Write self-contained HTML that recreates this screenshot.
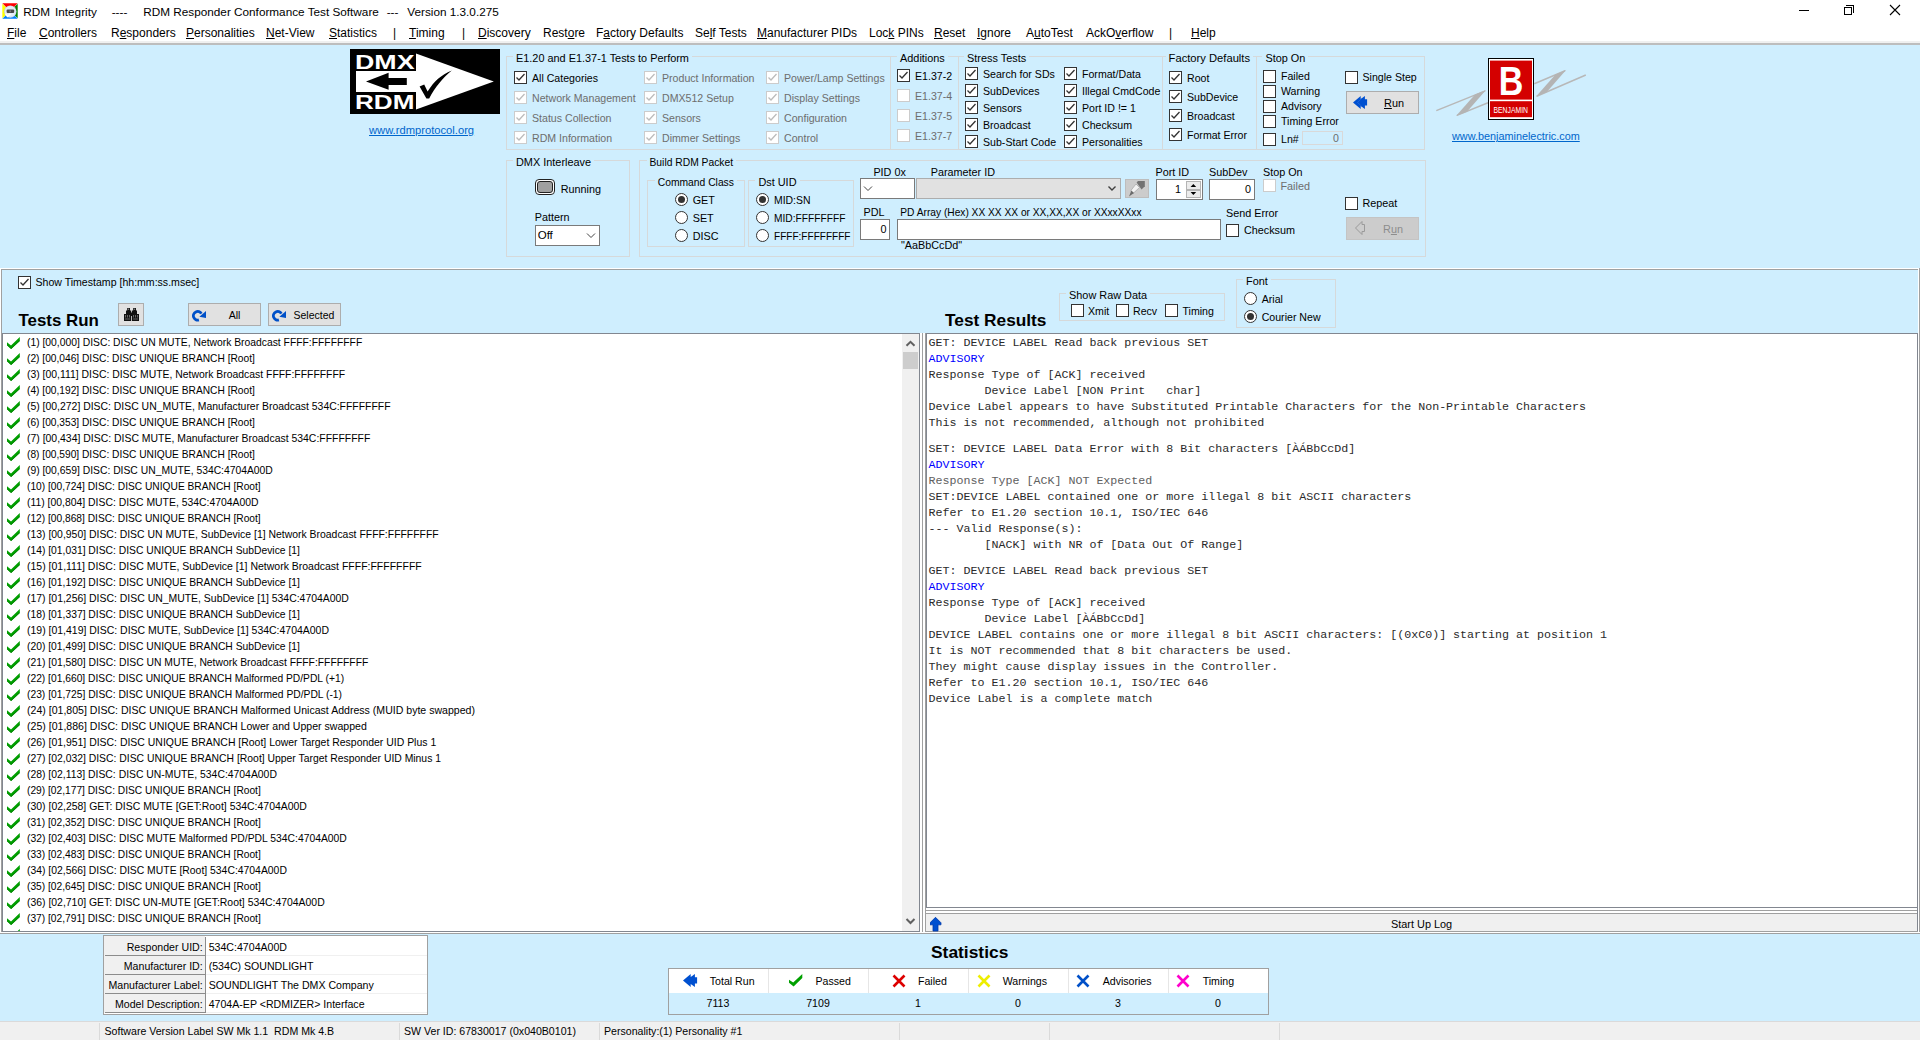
<!DOCTYPE html>
<html><head><meta charset="utf-8"><style>
html,body{margin:0;padding:0;width:1920px;height:1040px;overflow:hidden;background:#fff}
body{position:relative;font-family:"Liberation Sans",sans-serif}
body div,body svg{position:absolute}
.t{white-space:pre;line-height:normal}
u{text-decoration:underline;text-underline-offset:1px}
</style></head><body>
<div style="left:0px;top:0px;width:1920px;height:43px;background:#fff"></div>
<svg style="left:2px;top:3px" width="16" height="16" viewBox="0 0 16 16">
<polygon points="0.3,0.3 15.7,0.3 8,8" fill="#ff0000"/>
<polygon points="15.7,0.8 15.7,15.2 8,8" fill="#008000"/>
<polygon points="15.7,15.7 0.3,15.7 8,8" fill="#0080ff"/>
<polygon points="0.3,15.2 0.3,0.8 8,8" fill="#ffff00"/>
<circle cx="8.3" cy="8.6" r="6.2" fill="#c8d4e6"/>
<circle cx="8.3" cy="8.4" r="5.4" fill="#e4ecf6"/>
<rect x="4.6" y="6.6" width="7.6" height="3.4" rx="1" fill="#4a4a4a"/>
<rect x="7.6" y="7.4" width="1.2" height="1.8" fill="#888"/>
<path d="M3.6 10.6 L5.6 13.4 L8.4 10.8" stroke="#fff" stroke-width="1.6" fill="none"/>
</svg>
<div class="t" style="left:23.3px;top:5px;font-size:11.75px;color:#000;font-weight:normal;font-family:'Liberation Sans', sans-serif;">RDM</div>
<div class="t" style="left:55px;top:5px;font-size:11.75px;color:#000;font-weight:normal;font-family:'Liberation Sans', sans-serif;">Integrity</div>
<div class="t" style="left:111.7px;top:5px;font-size:11.75px;color:#000;font-weight:normal;font-family:'Liberation Sans', sans-serif;">----</div>
<div class="t" style="left:143.3px;top:5px;font-size:11.75px;color:#000;font-weight:normal;font-family:'Liberation Sans', sans-serif;">RDM Responder Conformance Test Software</div>
<div class="t" style="left:386.7px;top:5px;font-size:11.75px;color:#000;font-weight:normal;font-family:'Liberation Sans', sans-serif;">---</div>
<div class="t" style="left:407.3px;top:5px;font-size:11.75px;color:#000;font-weight:normal;font-family:'Liberation Sans', sans-serif;">Version 1.3.0.275</div>
<div style="left:1799px;top:10px;width:10px;height:1px;background:#000"></div>
<div style="left:1846px;top:5px;width:8px;height:8px;border:1px solid #000;box-sizing:border-box;border-left:none;border-bottom:none"></div>
<div style="left:1844px;top:7px;width:8px;height:8px;border:1px solid #000;box-sizing:border-box;background:#fff"></div>
<svg style="left:1889px;top:4px" width="12" height="12" viewBox="0 0 12 12"><path d="M1 1 L11 11 M11 1 L1 11" stroke="#000" stroke-width="1.1"/></svg>
<div class="t" style="left:7px;top:26px;font-size:12px;color:#000;font-weight:normal;font-family:'Liberation Sans', sans-serif;"><u>F</u>ile</div>
<div class="t" style="left:39px;top:26px;font-size:12px;color:#000;font-weight:normal;font-family:'Liberation Sans', sans-serif;"><u>C</u>ontrollers</div>
<div class="t" style="left:111px;top:26px;font-size:12px;color:#000;font-weight:normal;font-family:'Liberation Sans', sans-serif;">R<u>e</u>sponders</div>
<div class="t" style="left:186px;top:26px;font-size:12px;color:#000;font-weight:normal;font-family:'Liberation Sans', sans-serif;"><u>P</u>ersonalities</div>
<div class="t" style="left:266px;top:26px;font-size:12px;color:#000;font-weight:normal;font-family:'Liberation Sans', sans-serif;"><u>N</u>et-View</div>
<div class="t" style="left:329px;top:26px;font-size:12px;color:#000;font-weight:normal;font-family:'Liberation Sans', sans-serif;"><u>S</u>tatistics</div>
<div class="t" style="left:393px;top:26px;font-size:12px;color:#000;font-weight:normal;font-family:'Liberation Sans', sans-serif;">|</div>
<div class="t" style="left:409px;top:26px;font-size:12px;color:#000;font-weight:normal;font-family:'Liberation Sans', sans-serif;"><u>T</u>iming</div>
<div class="t" style="left:462px;top:26px;font-size:12px;color:#000;font-weight:normal;font-family:'Liberation Sans', sans-serif;">|</div>
<div class="t" style="left:478px;top:26px;font-size:12px;color:#000;font-weight:normal;font-family:'Liberation Sans', sans-serif;"><u>D</u>iscovery</div>
<div class="t" style="left:543px;top:26px;font-size:12px;color:#000;font-weight:normal;font-family:'Liberation Sans', sans-serif;">Rest<u>o</u>re</div>
<div class="t" style="left:596px;top:26px;font-size:12px;color:#000;font-weight:normal;font-family:'Liberation Sans', sans-serif;">F<u>a</u>ctory Defaults</div>
<div class="t" style="left:695px;top:26px;font-size:12px;color:#000;font-weight:normal;font-family:'Liberation Sans', sans-serif;">Se<u>l</u>f Tests</div>
<div class="t" style="left:757px;top:26px;font-size:12px;color:#000;font-weight:normal;font-family:'Liberation Sans', sans-serif;"><u>M</u>anufacturer PIDs</div>
<div class="t" style="left:869px;top:26px;font-size:12px;color:#000;font-weight:normal;font-family:'Liberation Sans', sans-serif;">Loc<u>k</u> PINs</div>
<div class="t" style="left:934px;top:26px;font-size:12px;color:#000;font-weight:normal;font-family:'Liberation Sans', sans-serif;"><u>R</u>eset</div>
<div class="t" style="left:977px;top:26px;font-size:12px;color:#000;font-weight:normal;font-family:'Liberation Sans', sans-serif;"><u>I</u>gnore</div>
<div class="t" style="left:1026px;top:26px;font-size:12px;color:#000;font-weight:normal;font-family:'Liberation Sans', sans-serif;">A<u>u</u>toTest</div>
<div class="t" style="left:1086px;top:26px;font-size:12px;color:#000;font-weight:normal;font-family:'Liberation Sans', sans-serif;">AckO<u>v</u>erflow</div>
<div class="t" style="left:1169px;top:26px;font-size:12px;color:#000;font-weight:normal;font-family:'Liberation Sans', sans-serif;">|</div>
<div class="t" style="left:1191px;top:26px;font-size:12px;color:#000;font-weight:normal;font-family:'Liberation Sans', sans-serif;"><u>H</u>elp</div>
<div style="left:0px;top:41px;width:1920px;height:2px;background:#f0f0f0"></div>
<div style="left:0px;top:43px;width:1920px;height:2px;background:#bdbdbd"></div>
<div style="left:0px;top:45px;width:1920px;height:223px;background:#cfeefe"></div>
<div style="left:0px;top:268px;width:1920px;height:753px;background:#cfeefe"></div>
<div style="left:0px;top:268px;width:1920px;height:1px;background:#fff"></div>
<div style="left:1px;top:269px;width:1919px;height:1px;background:#a0a0a0"></div>
<div style="left:1px;top:269px;width:1px;height:664px;background:#a0a0a0"></div>
<div style="left:0px;top:268px;width:1px;height:666px;background:#fff"></div>
<div style="left:1918px;top:269px;width:1px;height:664px;background:#fff"></div>
<div style="left:1919px;top:268px;width:1px;height:666px;background:#a0a0a0"></div>
<div style="left:0px;top:1021px;width:1920px;height:19px;background:#f0f0f0;border-top:1px solid #d7d7d7;box-sizing:border-box"></div>
<div style="left:350px;top:49px;width:150px;height:65px;background:#000"></div>
<svg style="left:350px;top:49px" width="150" height="65" viewBox="0 0 150 65">
<rect x="6" y="22" width="60.5" height="21" fill="#fff"/>
<polygon points="66,4.6 143.8,32.5 66,60.4" fill="#fff"/>
<polygon points="16,32.5 38.6,23.8 38.6,29 56.8,29 56.8,36 38.6,36 38.6,40.7" fill="#000"/>
<path d="M69.6 37.6 L74.2 35.4 L77.6 42.6 C84 32.5 91 26 101.8 21.6 C93 29 85 38 79.2 49.6 L76.4 49.4 Z" fill="#000"/>
<text x="5" y="20" font-family="Liberation Sans" font-weight="bold" font-size="19.8" fill="#fff" textLength="59.5" lengthAdjust="spacingAndGlyphs">DMX</text>
<text x="5" y="60.4" font-family="Liberation Sans" font-weight="bold" font-size="19.8" fill="#fff" textLength="59.5" lengthAdjust="spacingAndGlyphs">RDM</text>
</svg>
<div class="t" style="left:369px;top:124px;font-size:11.2px;color:#0066cc;font-weight:normal;font-family:'Liberation Sans', sans-serif;"><u>www.rdmprotocol.org</u></div>
<div style="left:506px;top:56px;width:385px;height:94px;border:1px solid #d6d9da;box-sizing:border-box"></div>
<div class="t" style="left:513px;top:51.7px;font-size:10.9px;color:#000;font-weight:normal;font-family:'Liberation Sans', sans-serif;background:#cfeefe;padding:0 3px">E1.20 and E1.37-1 Tests to Perform</div>
<div style="left:514px;top:71px;width:11px;height:11px;border:1px solid #333333;background:#fff"></div><svg style="left:514px;top:71px" width="13" height="13" viewBox="0 0 13 13"><path d="M2.5 6.5 L5 9 L10.5 3" fill="none" stroke="#333333" stroke-width="1.3"/></svg><div class="t" style="left:532px;top:71.7px;font-size:10.6px;color:#000;font-weight:normal;font-family:'Liberation Sans', sans-serif;">All Categories</div>
<div style="left:644px;top:71px;width:11px;height:11px;border:1px solid #cccccc;background:#fff"></div><svg style="left:644px;top:71px" width="13" height="13" viewBox="0 0 13 13"><path d="M2.5 6.5 L5 9 L10.5 3" fill="none" stroke="#bcbcbc" stroke-width="1.3"/></svg><div class="t" style="left:662px;top:71.7px;font-size:10.6px;color:#6d6d6d;font-weight:normal;font-family:'Liberation Sans', sans-serif;">Product Information</div>
<div style="left:766px;top:71px;width:11px;height:11px;border:1px solid #cccccc;background:#fff"></div><svg style="left:766px;top:71px" width="13" height="13" viewBox="0 0 13 13"><path d="M2.5 6.5 L5 9 L10.5 3" fill="none" stroke="#bcbcbc" stroke-width="1.3"/></svg><div class="t" style="left:784px;top:71.7px;font-size:10.6px;color:#6d6d6d;font-weight:normal;font-family:'Liberation Sans', sans-serif;">Power/Lamp Settings</div>
<div style="left:514px;top:91px;width:11px;height:11px;border:1px solid #cccccc;background:#fff"></div><svg style="left:514px;top:91px" width="13" height="13" viewBox="0 0 13 13"><path d="M2.5 6.5 L5 9 L10.5 3" fill="none" stroke="#bcbcbc" stroke-width="1.3"/></svg><div class="t" style="left:532px;top:91.7px;font-size:10.6px;color:#6d6d6d;font-weight:normal;font-family:'Liberation Sans', sans-serif;">Network Management</div>
<div style="left:644px;top:91px;width:11px;height:11px;border:1px solid #cccccc;background:#fff"></div><svg style="left:644px;top:91px" width="13" height="13" viewBox="0 0 13 13"><path d="M2.5 6.5 L5 9 L10.5 3" fill="none" stroke="#bcbcbc" stroke-width="1.3"/></svg><div class="t" style="left:662px;top:91.7px;font-size:10.6px;color:#6d6d6d;font-weight:normal;font-family:'Liberation Sans', sans-serif;">DMX512 Setup</div>
<div style="left:766px;top:91px;width:11px;height:11px;border:1px solid #cccccc;background:#fff"></div><svg style="left:766px;top:91px" width="13" height="13" viewBox="0 0 13 13"><path d="M2.5 6.5 L5 9 L10.5 3" fill="none" stroke="#bcbcbc" stroke-width="1.3"/></svg><div class="t" style="left:784px;top:91.7px;font-size:10.6px;color:#6d6d6d;font-weight:normal;font-family:'Liberation Sans', sans-serif;">Display Settings</div>
<div style="left:514px;top:111px;width:11px;height:11px;border:1px solid #cccccc;background:#fff"></div><svg style="left:514px;top:111px" width="13" height="13" viewBox="0 0 13 13"><path d="M2.5 6.5 L5 9 L10.5 3" fill="none" stroke="#bcbcbc" stroke-width="1.3"/></svg><div class="t" style="left:532px;top:111.7px;font-size:10.6px;color:#6d6d6d;font-weight:normal;font-family:'Liberation Sans', sans-serif;">Status Collection</div>
<div style="left:644px;top:111px;width:11px;height:11px;border:1px solid #cccccc;background:#fff"></div><svg style="left:644px;top:111px" width="13" height="13" viewBox="0 0 13 13"><path d="M2.5 6.5 L5 9 L10.5 3" fill="none" stroke="#bcbcbc" stroke-width="1.3"/></svg><div class="t" style="left:662px;top:111.7px;font-size:10.6px;color:#6d6d6d;font-weight:normal;font-family:'Liberation Sans', sans-serif;">Sensors</div>
<div style="left:766px;top:111px;width:11px;height:11px;border:1px solid #cccccc;background:#fff"></div><svg style="left:766px;top:111px" width="13" height="13" viewBox="0 0 13 13"><path d="M2.5 6.5 L5 9 L10.5 3" fill="none" stroke="#bcbcbc" stroke-width="1.3"/></svg><div class="t" style="left:784px;top:111.7px;font-size:10.6px;color:#6d6d6d;font-weight:normal;font-family:'Liberation Sans', sans-serif;">Configuration</div>
<div style="left:514px;top:131px;width:11px;height:11px;border:1px solid #cccccc;background:#fff"></div><svg style="left:514px;top:131px" width="13" height="13" viewBox="0 0 13 13"><path d="M2.5 6.5 L5 9 L10.5 3" fill="none" stroke="#bcbcbc" stroke-width="1.3"/></svg><div class="t" style="left:532px;top:131.7px;font-size:10.6px;color:#6d6d6d;font-weight:normal;font-family:'Liberation Sans', sans-serif;">RDM Information</div>
<div style="left:644px;top:131px;width:11px;height:11px;border:1px solid #cccccc;background:#fff"></div><svg style="left:644px;top:131px" width="13" height="13" viewBox="0 0 13 13"><path d="M2.5 6.5 L5 9 L10.5 3" fill="none" stroke="#bcbcbc" stroke-width="1.3"/></svg><div class="t" style="left:662px;top:131.7px;font-size:10.6px;color:#6d6d6d;font-weight:normal;font-family:'Liberation Sans', sans-serif;">Dimmer Settings</div>
<div style="left:766px;top:131px;width:11px;height:11px;border:1px solid #cccccc;background:#fff"></div><svg style="left:766px;top:131px" width="13" height="13" viewBox="0 0 13 13"><path d="M2.5 6.5 L5 9 L10.5 3" fill="none" stroke="#bcbcbc" stroke-width="1.3"/></svg><div class="t" style="left:784px;top:131.7px;font-size:10.6px;color:#6d6d6d;font-weight:normal;font-family:'Liberation Sans', sans-serif;">Control</div>
<div style="left:890px;top:56px;width:69px;height:94px;border:1px solid #d6d9da;box-sizing:border-box"></div>
<div class="t" style="left:897px;top:51.7px;font-size:10.9px;color:#000;font-weight:normal;font-family:'Liberation Sans', sans-serif;background:#cfeefe;padding:0 3px">Additions</div>
<div style="left:897px;top:69px;width:11px;height:11px;border:1px solid #333333;background:#fff"></div><svg style="left:897px;top:69px" width="13" height="13" viewBox="0 0 13 13"><path d="M2.5 6.5 L5 9 L10.5 3" fill="none" stroke="#333333" stroke-width="1.3"/></svg><div class="t" style="left:915px;top:69.7px;font-size:10.6px;color:#000;font-weight:normal;font-family:'Liberation Sans', sans-serif;">E1.37-2</div>
<div style="left:897px;top:89px;width:11px;height:11px;border:1px solid #cccccc;background:#fff"></div><div class="t" style="left:915px;top:89.7px;font-size:10.6px;color:#6d6d6d;font-weight:normal;font-family:'Liberation Sans', sans-serif;">E1.37-4</div>
<div style="left:897px;top:109px;width:11px;height:11px;border:1px solid #cccccc;background:#fff"></div><div class="t" style="left:915px;top:109.7px;font-size:10.6px;color:#6d6d6d;font-weight:normal;font-family:'Liberation Sans', sans-serif;">E1.37-5</div>
<div style="left:897px;top:129px;width:11px;height:11px;border:1px solid #cccccc;background:#fff"></div><div class="t" style="left:915px;top:129.7px;font-size:10.6px;color:#6d6d6d;font-weight:normal;font-family:'Liberation Sans', sans-serif;">E1.37-7</div>
<div style="left:958px;top:56px;width:205px;height:94px;border:1px solid #d6d9da;box-sizing:border-box"></div>
<div class="t" style="left:964px;top:51.7px;font-size:10.9px;color:#000;font-weight:normal;font-family:'Liberation Sans', sans-serif;background:#cfeefe;padding:0 3px">Stress Tests</div>
<div style="left:965px;top:67px;width:11px;height:11px;border:1px solid #333333;background:#fff"></div><svg style="left:965px;top:67px" width="13" height="13" viewBox="0 0 13 13"><path d="M2.5 6.5 L5 9 L10.5 3" fill="none" stroke="#333333" stroke-width="1.3"/></svg><div class="t" style="left:983px;top:67.7px;font-size:10.6px;color:#000;font-weight:normal;font-family:'Liberation Sans', sans-serif;">Search for SDs</div>
<div style="left:1064px;top:67px;width:11px;height:11px;border:1px solid #333333;background:#fff"></div><svg style="left:1064px;top:67px" width="13" height="13" viewBox="0 0 13 13"><path d="M2.5 6.5 L5 9 L10.5 3" fill="none" stroke="#333333" stroke-width="1.3"/></svg><div class="t" style="left:1082px;top:67.7px;font-size:10.6px;color:#000;font-weight:normal;font-family:'Liberation Sans', sans-serif;">Format/Data</div>
<div style="left:965px;top:84px;width:11px;height:11px;border:1px solid #333333;background:#fff"></div><svg style="left:965px;top:84px" width="13" height="13" viewBox="0 0 13 13"><path d="M2.5 6.5 L5 9 L10.5 3" fill="none" stroke="#333333" stroke-width="1.3"/></svg><div class="t" style="left:983px;top:84.7px;font-size:10.6px;color:#000;font-weight:normal;font-family:'Liberation Sans', sans-serif;">SubDevices</div>
<div style="left:1064px;top:84px;width:11px;height:11px;border:1px solid #333333;background:#fff"></div><svg style="left:1064px;top:84px" width="13" height="13" viewBox="0 0 13 13"><path d="M2.5 6.5 L5 9 L10.5 3" fill="none" stroke="#333333" stroke-width="1.3"/></svg><div class="t" style="left:1082px;top:84.7px;font-size:10.6px;color:#000;font-weight:normal;font-family:'Liberation Sans', sans-serif;">Illegal CmdCode</div>
<div style="left:965px;top:101px;width:11px;height:11px;border:1px solid #333333;background:#fff"></div><svg style="left:965px;top:101px" width="13" height="13" viewBox="0 0 13 13"><path d="M2.5 6.5 L5 9 L10.5 3" fill="none" stroke="#333333" stroke-width="1.3"/></svg><div class="t" style="left:983px;top:101.7px;font-size:10.6px;color:#000;font-weight:normal;font-family:'Liberation Sans', sans-serif;">Sensors</div>
<div style="left:1064px;top:101px;width:11px;height:11px;border:1px solid #333333;background:#fff"></div><svg style="left:1064px;top:101px" width="13" height="13" viewBox="0 0 13 13"><path d="M2.5 6.5 L5 9 L10.5 3" fill="none" stroke="#333333" stroke-width="1.3"/></svg><div class="t" style="left:1082px;top:101.7px;font-size:10.6px;color:#000;font-weight:normal;font-family:'Liberation Sans', sans-serif;">Port ID != 1</div>
<div style="left:965px;top:118px;width:11px;height:11px;border:1px solid #333333;background:#fff"></div><svg style="left:965px;top:118px" width="13" height="13" viewBox="0 0 13 13"><path d="M2.5 6.5 L5 9 L10.5 3" fill="none" stroke="#333333" stroke-width="1.3"/></svg><div class="t" style="left:983px;top:118.69999999999999px;font-size:10.6px;color:#000;font-weight:normal;font-family:'Liberation Sans', sans-serif;">Broadcast</div>
<div style="left:1064px;top:118px;width:11px;height:11px;border:1px solid #333333;background:#fff"></div><svg style="left:1064px;top:118px" width="13" height="13" viewBox="0 0 13 13"><path d="M2.5 6.5 L5 9 L10.5 3" fill="none" stroke="#333333" stroke-width="1.3"/></svg><div class="t" style="left:1082px;top:118.69999999999999px;font-size:10.6px;color:#000;font-weight:normal;font-family:'Liberation Sans', sans-serif;">Checksum</div>
<div style="left:965px;top:135px;width:11px;height:11px;border:1px solid #333333;background:#fff"></div><svg style="left:965px;top:135px" width="13" height="13" viewBox="0 0 13 13"><path d="M2.5 6.5 L5 9 L10.5 3" fill="none" stroke="#333333" stroke-width="1.3"/></svg><div class="t" style="left:983px;top:135.7px;font-size:10.6px;color:#000;font-weight:normal;font-family:'Liberation Sans', sans-serif;">Sub-Start Code</div>
<div style="left:1064px;top:135px;width:11px;height:11px;border:1px solid #333333;background:#fff"></div><svg style="left:1064px;top:135px" width="13" height="13" viewBox="0 0 13 13"><path d="M2.5 6.5 L5 9 L10.5 3" fill="none" stroke="#333333" stroke-width="1.3"/></svg><div class="t" style="left:1082px;top:135.7px;font-size:10.6px;color:#000;font-weight:normal;font-family:'Liberation Sans', sans-serif;">Personalities</div>
<div style="left:1162px;top:56px;width:95px;height:94px;border:1px solid #d6d9da;box-sizing:border-box"></div>
<div class="t" style="left:1165.6px;top:51.9px;font-size:11.2px;color:#000;font-weight:normal;font-family:'Liberation Sans', sans-serif;background:#cfeefe;padding:0 3px">Factory Defaults</div>
<div style="left:1169px;top:71px;width:11px;height:11px;border:1px solid #333333;background:#fff"></div><svg style="left:1169px;top:71px" width="13" height="13" viewBox="0 0 13 13"><path d="M2.5 6.5 L5 9 L10.5 3" fill="none" stroke="#333333" stroke-width="1.3"/></svg><div class="t" style="left:1187px;top:71.7px;font-size:10.6px;color:#000;font-weight:normal;font-family:'Liberation Sans', sans-serif;">Root</div>
<div style="left:1169px;top:90px;width:11px;height:11px;border:1px solid #333333;background:#fff"></div><svg style="left:1169px;top:90px" width="13" height="13" viewBox="0 0 13 13"><path d="M2.5 6.5 L5 9 L10.5 3" fill="none" stroke="#333333" stroke-width="1.3"/></svg><div class="t" style="left:1187px;top:90.7px;font-size:10.6px;color:#000;font-weight:normal;font-family:'Liberation Sans', sans-serif;">SubDevice</div>
<div style="left:1169px;top:109px;width:11px;height:11px;border:1px solid #333333;background:#fff"></div><svg style="left:1169px;top:109px" width="13" height="13" viewBox="0 0 13 13"><path d="M2.5 6.5 L5 9 L10.5 3" fill="none" stroke="#333333" stroke-width="1.3"/></svg><div class="t" style="left:1187px;top:109.7px;font-size:10.6px;color:#000;font-weight:normal;font-family:'Liberation Sans', sans-serif;">Broadcast</div>
<div style="left:1169px;top:128px;width:11px;height:11px;border:1px solid #333333;background:#fff"></div><svg style="left:1169px;top:128px" width="13" height="13" viewBox="0 0 13 13"><path d="M2.5 6.5 L5 9 L10.5 3" fill="none" stroke="#333333" stroke-width="1.3"/></svg><div class="t" style="left:1187px;top:128.7px;font-size:10.6px;color:#000;font-weight:normal;font-family:'Liberation Sans', sans-serif;">Format Error</div>
<div style="left:1256px;top:56px;width:169px;height:94px;border:1px solid #d6d9da;box-sizing:border-box"></div>
<div class="t" style="left:1262.4px;top:51.9px;font-size:10.9px;color:#000;font-weight:normal;font-family:'Liberation Sans', sans-serif;background:#cfeefe;padding:0 3px">Stop On</div>
<div style="left:1263px;top:70px;width:11px;height:11px;border:1px solid #333333;background:#fff"></div><div class="t" style="left:1281px;top:70.2px;font-size:10.6px;color:#000;font-weight:normal;font-family:'Liberation Sans', sans-serif;">Failed</div>
<div style="left:1263px;top:85px;width:11px;height:11px;border:1px solid #333333;background:#fff"></div><div class="t" style="left:1281px;top:85.2px;font-size:10.6px;color:#000;font-weight:normal;font-family:'Liberation Sans', sans-serif;">Warning</div>
<div style="left:1263px;top:100px;width:11px;height:11px;border:1px solid #333333;background:#fff"></div><div class="t" style="left:1281px;top:100.2px;font-size:10.6px;color:#000;font-weight:normal;font-family:'Liberation Sans', sans-serif;">Advisory</div>
<div style="left:1263px;top:115px;width:11px;height:11px;border:1px solid #333333;background:#fff"></div><div class="t" style="left:1281px;top:115.2px;font-size:10.6px;color:#000;font-weight:normal;font-family:'Liberation Sans', sans-serif;">Timing Error</div>
<div style="left:1263px;top:133px;width:11px;height:11px;border:1px solid #333333;background:#fff"></div><div class="t" style="left:1281px;top:132.5px;font-size:10.6px;color:#000;font-weight:normal;font-family:'Liberation Sans', sans-serif;">Ln#</div>
<div style="left:1302px;top:131px;width:41px;height:14px;border:1px solid #d9d9d9;box-sizing:border-box;background:#cfeefe"></div>
<div class="t" style="left:1333px;top:132px;font-size:10.6px;color:#6d6d6d;font-weight:normal;font-family:'Liberation Sans', sans-serif;">0</div>
<div style="left:1345px;top:71px;width:11px;height:11px;border:1px solid #333333;background:#fff"></div><div class="t" style="left:1362.5px;top:70.8px;font-size:10.6px;color:#000;font-weight:normal;font-family:'Liberation Sans', sans-serif;">Single Step</div>
<div style="left:1346px;top:91px;width:73px;height:23px;background:#e1e1e1;border:1px solid #adadad;box-sizing:border-box"></div>
<svg style="left:1353px;top:96px" width="15" height="13" viewBox="0 0 15 13"><polygon points="0,6.4 7.7,0 7.7,3 11.9,0 11.9,3.2 14.1,3.2 14.1,9.6 11.9,9.6 11.9,13 7.7,10 7.7,13" fill="#0050d0"/><path d="M4.4 6.4 L8.6 2.6 M4.4 6.4 L8.6 10.2" stroke="#2a6be0" stroke-width="0.7"/></svg>
<div class="t" style="left:1384px;top:97.2px;font-size:10.9px;color:#000;font-weight:normal;font-family:'Liberation Sans', sans-serif;"><u>R</u>un</div>
<svg style="left:1430px;top:55px" width="170" height="70" viewBox="0 0 170 70">
<path d="M6.3 55.6 L55.3 35.9 M26.9 60.4 L58 47.8" fill="none" stroke="#b8b8b8" stroke-width="1.5"/>
<polygon points="56,35 45,39.6 26,61 37,56.8" fill="#b4b4b4"/>
<path d="M104.3 28.7 L135.1 15.7 M106.7 41.2 L155.8 20" fill="none" stroke="#b8b8b8" stroke-width="1.5"/>
<polygon points="136.3,14.8 125.5,19.4 105.8,41.8 116.6,37.2" fill="#b4b4b4"/>
<rect x="58.5" y="3.5" width="45" height="61" fill="#fff" stroke="#000" stroke-width="1"/>
<rect x="60" y="5.6" width="42" height="39" fill="#d40000"/>
<rect x="60" y="46.2" width="42" height="16" fill="#d40000"/>
<text x="68.8" y="39.7" font-family="Liberation Sans" font-weight="bold" font-size="40" fill="#fff" textLength="24.6" lengthAdjust="spacingAndGlyphs">B</text>
<text x="63.5" y="57.5" font-family="Liberation Sans" font-size="9.9" fill="#fff" textLength="34.5" lengthAdjust="spacingAndGlyphs">BENJAMIN</text>
</svg>
<div class="t" style="left:1452px;top:130.4px;font-size:10.85px;color:#0066cc;font-weight:normal;font-family:'Liberation Sans', sans-serif;"><u>www.benjaminelectric.com</u></div>
<div style="left:506px;top:160px;width:124px;height:97px;border:1px solid #d6d9da;box-sizing:border-box"></div>
<div class="t" style="left:513px;top:155.5px;font-size:10.9px;color:#000;font-weight:normal;font-family:'Liberation Sans', sans-serif;background:#cfeefe;padding:0 3px">DMX Interleave</div>
<div style="left:535px;top:179px;width:20px;height:16px;border:1px solid #222;border-radius:4px;box-sizing:border-box;background:#fff"></div>
<div style="left:537px;top:181px;width:16px;height:12px;border:1px solid #222;border-radius:3px;box-sizing:border-box;background:#a0a0a0"></div>
<div class="t" style="left:560.8px;top:182.7px;font-size:10.8px;color:#000;font-weight:normal;font-family:'Liberation Sans', sans-serif;">Running</div>
<div class="t" style="left:534.8px;top:210.8px;font-size:10.8px;color:#000;font-weight:normal;font-family:'Liberation Sans', sans-serif;">Pattern</div>
<div style="left:535px;top:225px;width:65px;height:21px;border:1px solid #7a7a7a;box-sizing:border-box;background:#fff"></div>
<div class="t" style="left:537.7px;top:228.5px;font-size:11.5px;color:#000;font-weight:normal;font-family:'Liberation Sans', sans-serif;">Off</div>
<svg style="left:586px;top:232px" width="10" height="7" viewBox="0 0 10 7"><path d="M1 1.5 L5 5.5 L9 1.5" fill="none" stroke="#444" stroke-width="1"/></svg>
<div style="left:639px;top:160px;width:787px;height:97px;border:1px solid #d6d9da;box-sizing:border-box"></div>
<div class="t" style="left:646.5px;top:156.9px;font-size:10.3px;color:#000;font-weight:normal;font-family:'Liberation Sans', sans-serif;background:#cfeefe;padding:0 3px">Build RDM Packet</div>
<div style="left:647px;top:180px;width:98px;height:67px;border:1px solid #d6d9da;box-sizing:border-box"></div>
<div class="t" style="left:654.8px;top:176.7px;font-size:10.3px;color:#000;font-weight:normal;font-family:'Liberation Sans', sans-serif;background:#cfeefe;padding:0 3px">Command Class</div>
<div style="left:675px;top:193px;width:11px;height:11px;border:1px solid #333;border-radius:50%;background:#fff"></div><div style="left:678px;top:196px;width:7px;height:7px;border-radius:50%;background:#333"></div><div class="t" style="left:692.7px;top:194px;font-size:10.8px;color:#000;font-weight:normal;font-family:'Liberation Sans', sans-serif;">GET</div>
<div style="left:675px;top:211px;width:11px;height:11px;border:1px solid #333;border-radius:50%;background:#fff"></div><div class="t" style="left:692.7px;top:212px;font-size:10.8px;color:#000;font-weight:normal;font-family:'Liberation Sans', sans-serif;">SET</div>
<div style="left:675px;top:229px;width:11px;height:11px;border:1px solid #333;border-radius:50%;background:#fff"></div><div class="t" style="left:692.7px;top:230px;font-size:10.8px;color:#000;font-weight:normal;font-family:'Liberation Sans', sans-serif;">DISC</div>
<div style="left:748px;top:180px;width:106px;height:67px;border:1px solid #d6d9da;box-sizing:border-box"></div>
<div class="t" style="left:755.4px;top:175.7px;font-size:10.9px;color:#000;font-weight:normal;font-family:'Liberation Sans', sans-serif;background:#cfeefe;padding:0 3px">Dst UID</div>
<div style="left:756px;top:193px;width:11px;height:11px;border:1px solid #333;border-radius:50%;background:#fff"></div><div style="left:759px;top:196px;width:7px;height:7px;border-radius:50%;background:#333"></div><svg style="left:773.7px;top:193px;overflow:visible" width="38.5" height="15"><text x="0" y="11" font-family="Liberation Sans" font-size="10.8" font-weight="normal" fill="#000" textLength="36.5" lengthAdjust="spacingAndGlyphs">MID:SN</text></svg>
<div style="left:756px;top:211px;width:11px;height:11px;border:1px solid #333;border-radius:50%;background:#fff"></div><svg style="left:773.7px;top:211px;overflow:visible" width="73.5" height="15"><text x="0" y="11" font-family="Liberation Sans" font-size="10.8" font-weight="normal" fill="#000" textLength="71.5" lengthAdjust="spacingAndGlyphs">MID:FFFFFFFF</text></svg>
<div style="left:756px;top:229px;width:11px;height:11px;border:1px solid #333;border-radius:50%;background:#fff"></div><svg style="left:773.7px;top:229px;overflow:visible" width="78.5" height="15"><text x="0" y="11" font-family="Liberation Sans" font-size="10.8" font-weight="normal" fill="#000" textLength="76.5" lengthAdjust="spacingAndGlyphs">FFFF:FFFFFFFF</text></svg>
<div class="t" style="left:873.4px;top:165.6px;font-size:10.8px;color:#000;font-weight:normal;font-family:'Liberation Sans', sans-serif;">PID 0x</div>
<div class="t" style="left:930.8px;top:165.6px;font-size:10.8px;color:#000;font-weight:normal;font-family:'Liberation Sans', sans-serif;">Parameter ID</div>
<div style="left:860px;top:178px;width:55px;height:21px;border:1px solid #7a7a7a;box-sizing:border-box;background:#fff"></div>
<svg style="left:863px;top:185px" width="10" height="7" viewBox="0 0 10 7"><path d="M1 1.5 L5 5.5 L9 1.5" fill="none" stroke="#444" stroke-width="1"/></svg>
<div style="left:916px;top:178px;width:205px;height:21px;border:1px solid #adadad;box-sizing:border-box;background:#e1e1e1"></div>
<svg style="left:1107px;top:185px" width="10" height="7" viewBox="0 0 10 7"><path d="M1.5 1.5 L5 5 L8.5 1.5" fill="none" stroke="#404040" stroke-width="1.4"/></svg>
<div style="left:1125px;top:179px;width:24px;height:19px;background:#cccccc;border:1px solid #bdbdbd;box-sizing:border-box"></div>
<svg style="left:1125px;top:179px" width="24" height="19" viewBox="0 0 24 19">
<polygon points="11,5 14.5,8.5 8,14.5 5.5,12" fill="#f2f2f2" stroke="#9a9a9a" stroke-width="0.6"/>
<polygon points="11.6,3.6 13,2 19.8,2 19.8,7.2 16.6,10.6" fill="#727272"/>
<polygon points="4,17.6 6.4,11.4 9,14" fill="#6a6a6a"/>
</svg>
<div class="t" style="left:863.6px;top:205.5px;font-size:10.8px;color:#000;font-weight:normal;font-family:'Liberation Sans', sans-serif;">PDL</div>
<div style="left:860px;top:219px;width:30px;height:21px;border:1px solid #7a7a7a;box-sizing:border-box;background:#fff"></div>
<div class="t" style="left:880.5px;top:222.7px;font-size:10.8px;color:#000;font-weight:normal;font-family:'Liberation Sans', sans-serif;">0</div>
<div class="t" style="left:900.3px;top:206.5px;font-size:10.2px;color:#000;font-weight:normal;font-family:'Liberation Sans', sans-serif;">PD Array (Hex) XX XX XX or XX,XX,XX or XXxxXXxx</div>
<div style="left:897px;top:219px;width:324px;height:21px;border:1px solid #7a7a7a;box-sizing:border-box;background:#fff"></div>
<div class="t" style="left:901px;top:239px;font-size:10.8px;color:#000;font-weight:normal;font-family:'Liberation Sans', sans-serif;">"AaBbCcDd"</div>
<div class="t" style="left:1155.5px;top:166px;font-size:10.8px;color:#000;font-weight:normal;font-family:'Liberation Sans', sans-serif;">Port ID</div>
<div style="left:1156px;top:179px;width:47px;height:21px;border:1px solid #7a7a7a;box-sizing:border-box;background:#fff"></div>
<div class="t" style="left:1175px;top:182.5px;font-size:10.8px;color:#000;font-weight:normal;font-family:'Liberation Sans', sans-serif;">1</div>
<div style="left:1186px;top:181px;width:15px;height:9px;background:#ececec;border:1px solid #b4b4b4;box-sizing:border-box"></div>
<div style="left:1186px;top:190px;width:15px;height:8px;background:#ececec;border:1px solid #b4b4b4;box-sizing:border-box"></div>
<svg style="left:1186px;top:181px" width="15" height="17" viewBox="0 0 15 17"><polygon points="4.6,6 7.4,2.9 10.2,6" fill="#000"/><polygon points="4.6,11 7.4,14.1 10.2,11" fill="#000"/></svg>
<div class="t" style="left:1209px;top:166px;font-size:10.8px;color:#000;font-weight:normal;font-family:'Liberation Sans', sans-serif;">SubDev</div>
<div style="left:1209px;top:179px;width:46px;height:21px;border:1px solid #7a7a7a;box-sizing:border-box;background:#fff"></div>
<div class="t" style="left:1245px;top:182.5px;font-size:10.8px;color:#000;font-weight:normal;font-family:'Liberation Sans', sans-serif;">0</div>
<div class="t" style="left:1263px;top:166px;font-size:10.8px;color:#000;font-weight:normal;font-family:'Liberation Sans', sans-serif;">Stop On</div>
<div style="left:1263px;top:179px;width:11px;height:11px;border:1px solid #cccccc;background:#fff"></div><div class="t" style="left:1280.5px;top:179.5px;font-size:10.8px;color:#6d6d6d;font-weight:normal;font-family:'Liberation Sans', sans-serif;">Failed</div>
<div style="left:1345px;top:197px;width:11px;height:11px;border:1px solid #333333;background:#fff"></div><div class="t" style="left:1362.5px;top:197px;font-size:10.8px;color:#000;font-weight:normal;font-family:'Liberation Sans', sans-serif;">Repeat</div>
<div class="t" style="left:1226px;top:207px;font-size:10.8px;color:#000;font-weight:normal;font-family:'Liberation Sans', sans-serif;">Send Error</div>
<div style="left:1226px;top:224px;width:11px;height:11px;border:1px solid #333333;background:#fff"></div><div class="t" style="left:1244px;top:224px;font-size:10.8px;color:#000;font-weight:normal;font-family:'Liberation Sans', sans-serif;">Checksum</div>
<div style="left:1346px;top:217px;width:73px;height:23px;background:#cccccc;border:1px solid #c4c4c4;box-sizing:border-box"></div>
<svg style="left:1354px;top:220px" width="12" height="16" viewBox="0 0 12 16"><polygon points="1.5,8 8,1.5 8,4.5 10.5,4.5 10.5,11.5 8,11.5 8,14.5" fill="none" stroke="#9a9a9a" stroke-width="1"/></svg>
<div class="t" style="left:1383px;top:222.5px;font-size:10.9px;color:#8d8d8d;font-weight:normal;font-family:'Liberation Sans', sans-serif;">R<u>u</u>n</div>
<div style="left:18px;top:276px;width:11px;height:11px;border:1px solid #333333;background:#fff"></div><svg style="left:18px;top:276px" width="13" height="13" viewBox="0 0 13 13"><path d="M2.5 6.5 L5 9 L10.5 3" fill="none" stroke="#333333" stroke-width="1.3"/></svg><div class="t" style="left:35.5px;top:275.8px;font-size:10.57px;color:#000;font-weight:normal;font-family:'Liberation Sans', sans-serif;">Show Timestamp [hh:mm:ss.msec]</div>
<div class="t" style="left:18.5px;top:310.7px;font-size:16.9px;color:#000;font-weight:bold;font-family:'Liberation Sans', sans-serif;">Tests Run</div>
<div style="left:118px;top:303px;width:26px;height:23px;background:#e1e1e1;border:1px solid #adadad;box-sizing:border-box"></div>
<svg style="left:124px;top:308px" width="15" height="13" viewBox="0 0 15 13">
<g fill="#111"><rect x="3.2" y="0" width="2.8" height="3"/><rect x="9.2" y="0" width="2.8" height="3"/>
<rect x="2" y="2.5" width="5.2" height="4"/><rect x="8" y="2.5" width="5" height="4"/>
<rect x="0" y="6" width="7.2" height="7"/><rect x="8" y="6" width="7" height="7"/>
<rect x="6.5" y="4.5" width="2" height="3.5"/></g>
<rect x="4.2" y="0.7" width="0.9" height="0.9" fill="#ddd"/><rect x="10.2" y="0.7" width="0.9" height="0.9" fill="#ddd"/>
<g fill="#666"><rect x="1" y="7" width="1" height="2.5"/><rect x="3" y="7" width="1" height="2.5"/><rect x="5" y="7" width="1" height="2.5"/>
<rect x="9" y="7" width="1" height="2.5"/><rect x="11" y="7" width="1" height="2.5"/><rect x="13" y="7" width="1" height="2.5"/>
<rect x="1" y="10.5" width="5" height="1"/><rect x="9" y="10.5" width="5" height="1"/></g>
</svg>
<div style="left:188px;top:303px;width:73px;height:23px;background:#e1e1e1;border:1px solid #adadad;box-sizing:border-box"></div>
<svg style="left:192px;top:310px" width="15" height="12" viewBox="0 0 15 12">
<path d="M9.4 3.6 A4.3 4.3 0 1 0 6.9 9.9" fill="none" stroke="#0050c8" stroke-width="2.8"/>
<polygon points="7.4,6.8 14,1 14,8" fill="#0050c8"/>
</svg>
<div class="t" style="left:228.7px;top:308.7px;font-size:10.6px;color:#000;font-weight:normal;font-family:'Liberation Sans', sans-serif;">All</div>
<div style="left:268px;top:303px;width:73px;height:23px;background:#e1e1e1;border:1px solid #adadad;box-sizing:border-box"></div>
<svg style="left:272px;top:310px" width="15" height="12" viewBox="0 0 15 12">
<path d="M9.4 3.6 A4.3 4.3 0 1 0 6.9 9.9" fill="none" stroke="#0050c8" stroke-width="2.8"/>
<polygon points="7.4,6.8 14,1 14,8" fill="#0050c8"/>
</svg>
<div class="t" style="left:293.5px;top:308.7px;font-size:10.5px;color:#000;font-weight:normal;font-family:'Liberation Sans', sans-serif;">Selected</div>
<div class="t" style="left:945px;top:309.7px;font-size:17.3px;color:#000;font-weight:bold;font-family:'Liberation Sans', sans-serif;">Test Results</div>
<div style="left:1059px;top:293px;width:166px;height:28px;border:1px solid #d6d9da;box-sizing:border-box"></div>
<div class="t" style="left:1066px;top:288.7px;font-size:10.9px;color:#000;font-weight:normal;font-family:'Liberation Sans', sans-serif;background:#cfeefe;padding:0 3px">Show Raw Data</div>
<div style="left:1071px;top:304px;width:11px;height:11px;border:1px solid #333333;background:#fff"></div><div class="t" style="left:1088px;top:304.5px;font-size:10.6px;color:#000;font-weight:normal;font-family:'Liberation Sans', sans-serif;">Xmit</div>
<div style="left:1116px;top:304px;width:11px;height:11px;border:1px solid #333333;background:#fff"></div><div class="t" style="left:1133px;top:304.5px;font-size:10.6px;color:#000;font-weight:normal;font-family:'Liberation Sans', sans-serif;">Recv</div>
<div style="left:1165px;top:304px;width:11px;height:11px;border:1px solid #333333;background:#fff"></div><div class="t" style="left:1182.5px;top:304.5px;font-size:10.6px;color:#000;font-weight:normal;font-family:'Liberation Sans', sans-serif;">Timing</div>
<div style="left:1236px;top:279px;width:100px;height:49px;border:1px solid #d6d9da;box-sizing:border-box"></div>
<div class="t" style="left:1243px;top:275px;font-size:10.9px;color:#000;font-weight:normal;font-family:'Liberation Sans', sans-serif;background:#cfeefe;padding:0 3px">Font</div>
<div style="left:1244px;top:292px;width:11px;height:11px;border:1px solid #333;border-radius:50%;background:#fff"></div><div class="t" style="left:1261.7px;top:292.5px;font-size:10.6px;color:#000;font-weight:normal;font-family:'Liberation Sans', sans-serif;">Arial</div>
<div style="left:1244px;top:310px;width:11px;height:11px;border:1px solid #333;border-radius:50%;background:#fff"></div><div style="left:1247px;top:313px;width:7px;height:7px;border-radius:50%;background:#333"></div><div class="t" style="left:1261.7px;top:310.5px;font-size:10.6px;color:#000;font-weight:normal;font-family:'Liberation Sans', sans-serif;">Courier New</div>
<div style="left:2px;top:333px;width:918px;height:599px;background:#fff"></div>
<svg style="left:7px;top:337.1px" width="14" height="13" viewBox="0 0 14 13"><polygon points="0,5.3 4,8.6 12.8,0 12.8,4 4.1,11.9 0,8.2" fill="#00a000"/><polygon points="12.8,4 4.1,11.9 0,8.2 0,7.6 4.1,11 12.8,3.2" fill="#008000"/></svg>
<svg style="left:26.6px;top:334.9px;overflow:visible" width="337.2" height="15"><text x="0" y="11" font-family="Liberation Sans" font-size="10.6" font-weight="normal" fill="#000" textLength="335.2" lengthAdjust="spacingAndGlyphs">(1) [00,000] DISC: DISC UN MUTE, Network Broadcast FFFF:FFFFFFFF</text></svg>
<svg style="left:7px;top:353.1px" width="14" height="13" viewBox="0 0 14 13"><polygon points="0,5.3 4,8.6 12.8,0 12.8,4 4.1,11.9 0,8.2" fill="#00a000"/><polygon points="12.8,4 4.1,11.9 0,8.2 0,7.6 4.1,11 12.8,3.2" fill="#008000"/></svg>
<svg style="left:26.6px;top:350.9px;overflow:visible" width="229.9" height="15"><text x="0" y="11" font-family="Liberation Sans" font-size="10.6" font-weight="normal" fill="#000" textLength="227.9" lengthAdjust="spacingAndGlyphs">(2) [00,046] DISC: DISC UNIQUE BRANCH [Root]</text></svg>
<svg style="left:7px;top:369.1px" width="14" height="13" viewBox="0 0 14 13"><polygon points="0,5.3 4,8.6 12.8,0 12.8,4 4.1,11.9 0,8.2" fill="#00a000"/><polygon points="12.8,4 4.1,11.9 0,8.2 0,7.6 4.1,11 12.8,3.2" fill="#008000"/></svg>
<svg style="left:26.6px;top:366.9px;overflow:visible" width="320.2" height="15"><text x="0" y="11" font-family="Liberation Sans" font-size="10.6" font-weight="normal" fill="#000" textLength="318.2" lengthAdjust="spacingAndGlyphs">(3) [00,111] DISC: DISC MUTE, Network Broadcast FFFF:FFFFFFFF</text></svg>
<svg style="left:7px;top:385.1px" width="14" height="13" viewBox="0 0 14 13"><polygon points="0,5.3 4,8.6 12.8,0 12.8,4 4.1,11.9 0,8.2" fill="#00a000"/><polygon points="12.8,4 4.1,11.9 0,8.2 0,7.6 4.1,11 12.8,3.2" fill="#008000"/></svg>
<svg style="left:26.6px;top:382.9px;overflow:visible" width="229.9" height="15"><text x="0" y="11" font-family="Liberation Sans" font-size="10.6" font-weight="normal" fill="#000" textLength="227.9" lengthAdjust="spacingAndGlyphs">(4) [00,192] DISC: DISC UNIQUE BRANCH [Root]</text></svg>
<svg style="left:7px;top:401.1px" width="14" height="13" viewBox="0 0 14 13"><polygon points="0,5.3 4,8.6 12.8,0 12.8,4 4.1,11.9 0,8.2" fill="#00a000"/><polygon points="12.8,4 4.1,11.9 0,8.2 0,7.6 4.1,11 12.8,3.2" fill="#008000"/></svg>
<svg style="left:26.6px;top:398.9px;overflow:visible" width="365.5" height="15"><text x="0" y="11" font-family="Liberation Sans" font-size="10.6" font-weight="normal" fill="#000" textLength="363.5" lengthAdjust="spacingAndGlyphs">(5) [00,272] DISC: DISC UN_MUTE, Manufacturer Broadcast 534C:FFFFFFFF</text></svg>
<svg style="left:7px;top:417.1px" width="14" height="13" viewBox="0 0 14 13"><polygon points="0,5.3 4,8.6 12.8,0 12.8,4 4.1,11.9 0,8.2" fill="#00a000"/><polygon points="12.8,4 4.1,11.9 0,8.2 0,7.6 4.1,11 12.8,3.2" fill="#008000"/></svg>
<svg style="left:26.6px;top:414.9px;overflow:visible" width="229.9" height="15"><text x="0" y="11" font-family="Liberation Sans" font-size="10.6" font-weight="normal" fill="#000" textLength="227.9" lengthAdjust="spacingAndGlyphs">(6) [00,353] DISC: DISC UNIQUE BRANCH [Root]</text></svg>
<svg style="left:7px;top:433.1px" width="14" height="13" viewBox="0 0 14 13"><polygon points="0,5.3 4,8.6 12.8,0 12.8,4 4.1,11.9 0,8.2" fill="#00a000"/><polygon points="12.8,4 4.1,11.9 0,8.2 0,7.6 4.1,11 12.8,3.2" fill="#008000"/></svg>
<svg style="left:26.6px;top:430.9px;overflow:visible" width="345.3" height="15"><text x="0" y="11" font-family="Liberation Sans" font-size="10.6" font-weight="normal" fill="#000" textLength="343.3" lengthAdjust="spacingAndGlyphs">(7) [00,434] DISC: DISC MUTE, Manufacturer Broadcast 534C:FFFFFFFF</text></svg>
<svg style="left:7px;top:449.1px" width="14" height="13" viewBox="0 0 14 13"><polygon points="0,5.3 4,8.6 12.8,0 12.8,4 4.1,11.9 0,8.2" fill="#00a000"/><polygon points="12.8,4 4.1,11.9 0,8.2 0,7.6 4.1,11 12.8,3.2" fill="#008000"/></svg>
<svg style="left:26.6px;top:446.9px;overflow:visible" width="229.9" height="15"><text x="0" y="11" font-family="Liberation Sans" font-size="10.6" font-weight="normal" fill="#000" textLength="227.9" lengthAdjust="spacingAndGlyphs">(8) [00,590] DISC: DISC UNIQUE BRANCH [Root]</text></svg>
<svg style="left:7px;top:465.1px" width="14" height="13" viewBox="0 0 14 13"><polygon points="0,5.3 4,8.6 12.8,0 12.8,4 4.1,11.9 0,8.2" fill="#00a000"/><polygon points="12.8,4 4.1,11.9 0,8.2 0,7.6 4.1,11 12.8,3.2" fill="#008000"/></svg>
<svg style="left:26.6px;top:462.9px;overflow:visible" width="247.8" height="15"><text x="0" y="11" font-family="Liberation Sans" font-size="10.6" font-weight="normal" fill="#000" textLength="245.8" lengthAdjust="spacingAndGlyphs">(9) [00,659] DISC: DISC UN_MUTE, 534C:4704A00D</text></svg>
<svg style="left:7px;top:481.1px" width="14" height="13" viewBox="0 0 14 13"><polygon points="0,5.3 4,8.6 12.8,0 12.8,4 4.1,11.9 0,8.2" fill="#00a000"/><polygon points="12.8,4 4.1,11.9 0,8.2 0,7.6 4.1,11 12.8,3.2" fill="#008000"/></svg>
<svg style="left:26.6px;top:478.9px;overflow:visible" width="235.7" height="15"><text x="0" y="11" font-family="Liberation Sans" font-size="10.6" font-weight="normal" fill="#000" textLength="233.7" lengthAdjust="spacingAndGlyphs">(10) [00,724] DISC: DISC UNIQUE BRANCH [Root]</text></svg>
<svg style="left:7px;top:497.1px" width="14" height="13" viewBox="0 0 14 13"><polygon points="0,5.3 4,8.6 12.8,0 12.8,4 4.1,11.9 0,8.2" fill="#00a000"/><polygon points="12.8,4 4.1,11.9 0,8.2 0,7.6 4.1,11 12.8,3.2" fill="#008000"/></svg>
<svg style="left:26.6px;top:494.9px;overflow:visible" width="233.6" height="15"><text x="0" y="11" font-family="Liberation Sans" font-size="10.6" font-weight="normal" fill="#000" textLength="231.6" lengthAdjust="spacingAndGlyphs">(11) [00,804] DISC: DISC MUTE, 534C:4704A00D</text></svg>
<svg style="left:7px;top:513.1px" width="14" height="13" viewBox="0 0 14 13"><polygon points="0,5.3 4,8.6 12.8,0 12.8,4 4.1,11.9 0,8.2" fill="#00a000"/><polygon points="12.8,4 4.1,11.9 0,8.2 0,7.6 4.1,11 12.8,3.2" fill="#008000"/></svg>
<svg style="left:26.6px;top:510.9px;overflow:visible" width="235.7" height="15"><text x="0" y="11" font-family="Liberation Sans" font-size="10.6" font-weight="normal" fill="#000" textLength="233.7" lengthAdjust="spacingAndGlyphs">(12) [00,868] DISC: DISC UNIQUE BRANCH [Root]</text></svg>
<svg style="left:7px;top:529.1px" width="14" height="13" viewBox="0 0 14 13"><polygon points="0,5.3 4,8.6 12.8,0 12.8,4 4.1,11.9 0,8.2" fill="#00a000"/><polygon points="12.8,4 4.1,11.9 0,8.2 0,7.6 4.1,11 12.8,3.2" fill="#008000"/></svg>
<svg style="left:26.6px;top:526.9px;overflow:visible" width="413.7" height="15"><text x="0" y="11" font-family="Liberation Sans" font-size="10.6" font-weight="normal" fill="#000" textLength="411.7" lengthAdjust="spacingAndGlyphs">(13) [00,950] DISC: DISC UN MUTE, SubDevice [1] Network Broadcast FFFF:FFFFFFFF</text></svg>
<svg style="left:7px;top:545.1px" width="14" height="13" viewBox="0 0 14 13"><polygon points="0,5.3 4,8.6 12.8,0 12.8,4 4.1,11.9 0,8.2" fill="#00a000"/><polygon points="12.8,4 4.1,11.9 0,8.2 0,7.6 4.1,11 12.8,3.2" fill="#008000"/></svg>
<svg style="left:26.6px;top:542.9px;overflow:visible" width="274.9" height="15"><text x="0" y="11" font-family="Liberation Sans" font-size="10.6" font-weight="normal" fill="#000" textLength="272.9" lengthAdjust="spacingAndGlyphs">(14) [01,031] DISC: DISC UNIQUE BRANCH SubDevice [1]</text></svg>
<svg style="left:7px;top:561.1px" width="14" height="13" viewBox="0 0 14 13"><polygon points="0,5.3 4,8.6 12.8,0 12.8,4 4.1,11.9 0,8.2" fill="#00a000"/><polygon points="12.8,4 4.1,11.9 0,8.2 0,7.6 4.1,11 12.8,3.2" fill="#008000"/></svg>
<svg style="left:26.6px;top:558.9px;overflow:visible" width="396.7" height="15"><text x="0" y="11" font-family="Liberation Sans" font-size="10.6" font-weight="normal" fill="#000" textLength="394.7" lengthAdjust="spacingAndGlyphs">(15) [01,111] DISC: DISC MUTE, SubDevice [1] Network Broadcast FFFF:FFFFFFFF</text></svg>
<svg style="left:7px;top:577.1px" width="14" height="13" viewBox="0 0 14 13"><polygon points="0,5.3 4,8.6 12.8,0 12.8,4 4.1,11.9 0,8.2" fill="#00a000"/><polygon points="12.8,4 4.1,11.9 0,8.2 0,7.6 4.1,11 12.8,3.2" fill="#008000"/></svg>
<svg style="left:26.6px;top:574.9px;overflow:visible" width="274.9" height="15"><text x="0" y="11" font-family="Liberation Sans" font-size="10.6" font-weight="normal" fill="#000" textLength="272.9" lengthAdjust="spacingAndGlyphs">(16) [01,192] DISC: DISC UNIQUE BRANCH SubDevice [1]</text></svg>
<svg style="left:7px;top:593.1px" width="14" height="13" viewBox="0 0 14 13"><polygon points="0,5.3 4,8.6 12.8,0 12.8,4 4.1,11.9 0,8.2" fill="#00a000"/><polygon points="12.8,4 4.1,11.9 0,8.2 0,7.6 4.1,11 12.8,3.2" fill="#008000"/></svg>
<svg style="left:26.6px;top:590.9px;overflow:visible" width="323.9" height="15"><text x="0" y="11" font-family="Liberation Sans" font-size="10.6" font-weight="normal" fill="#000" textLength="321.9" lengthAdjust="spacingAndGlyphs">(17) [01,256] DISC: DISC UN_MUTE, SubDevice [1] 534C:4704A00D</text></svg>
<svg style="left:7px;top:609.1px" width="14" height="13" viewBox="0 0 14 13"><polygon points="0,5.3 4,8.6 12.8,0 12.8,4 4.1,11.9 0,8.2" fill="#00a000"/><polygon points="12.8,4 4.1,11.9 0,8.2 0,7.6 4.1,11 12.8,3.2" fill="#008000"/></svg>
<svg style="left:26.6px;top:606.9px;overflow:visible" width="274.9" height="15"><text x="0" y="11" font-family="Liberation Sans" font-size="10.6" font-weight="normal" fill="#000" textLength="272.9" lengthAdjust="spacingAndGlyphs">(18) [01,337] DISC: DISC UNIQUE BRANCH SubDevice [1]</text></svg>
<svg style="left:7px;top:625.1px" width="14" height="13" viewBox="0 0 14 13"><polygon points="0,5.3 4,8.6 12.8,0 12.8,4 4.1,11.9 0,8.2" fill="#00a000"/><polygon points="12.8,4 4.1,11.9 0,8.2 0,7.6 4.1,11 12.8,3.2" fill="#008000"/></svg>
<svg style="left:26.6px;top:622.9px;overflow:visible" width="304.0" height="15"><text x="0" y="11" font-family="Liberation Sans" font-size="10.6" font-weight="normal" fill="#000" textLength="302.0" lengthAdjust="spacingAndGlyphs">(19) [01,419] DISC: DISC MUTE, SubDevice [1] 534C:4704A00D</text></svg>
<svg style="left:7px;top:641.1px" width="14" height="13" viewBox="0 0 14 13"><polygon points="0,5.3 4,8.6 12.8,0 12.8,4 4.1,11.9 0,8.2" fill="#00a000"/><polygon points="12.8,4 4.1,11.9 0,8.2 0,7.6 4.1,11 12.8,3.2" fill="#008000"/></svg>
<svg style="left:26.6px;top:638.9px;overflow:visible" width="274.9" height="15"><text x="0" y="11" font-family="Liberation Sans" font-size="10.6" font-weight="normal" fill="#000" textLength="272.9" lengthAdjust="spacingAndGlyphs">(20) [01,499] DISC: DISC UNIQUE BRANCH SubDevice [1]</text></svg>
<svg style="left:7px;top:657.1px" width="14" height="13" viewBox="0 0 14 13"><polygon points="0,5.3 4,8.6 12.8,0 12.8,4 4.1,11.9 0,8.2" fill="#00a000"/><polygon points="12.8,4 4.1,11.9 0,8.2 0,7.6 4.1,11 12.8,3.2" fill="#008000"/></svg>
<svg style="left:26.6px;top:654.9px;overflow:visible" width="343.3" height="15"><text x="0" y="11" font-family="Liberation Sans" font-size="10.6" font-weight="normal" fill="#000" textLength="341.3" lengthAdjust="spacingAndGlyphs">(21) [01,580] DISC: DISC UN MUTE, Network Broadcast FFFF:FFFFFFFF</text></svg>
<svg style="left:7px;top:673.1px" width="14" height="13" viewBox="0 0 14 13"><polygon points="0,5.3 4,8.6 12.8,0 12.8,4 4.1,11.9 0,8.2" fill="#00a000"/><polygon points="12.8,4 4.1,11.9 0,8.2 0,7.6 4.1,11 12.8,3.2" fill="#008000"/></svg>
<svg style="left:26.6px;top:670.9px;overflow:visible" width="319.1" height="15"><text x="0" y="11" font-family="Liberation Sans" font-size="10.6" font-weight="normal" fill="#000" textLength="317.1" lengthAdjust="spacingAndGlyphs">(22) [01,660] DISC: DISC UNIQUE BRANCH Malformed PD/PDL (+1)</text></svg>
<svg style="left:7px;top:689.1px" width="14" height="13" viewBox="0 0 14 13"><polygon points="0,5.3 4,8.6 12.8,0 12.8,4 4.1,11.9 0,8.2" fill="#00a000"/><polygon points="12.8,4 4.1,11.9 0,8.2 0,7.6 4.1,11 12.8,3.2" fill="#008000"/></svg>
<svg style="left:26.6px;top:686.9px;overflow:visible" width="317.0" height="15"><text x="0" y="11" font-family="Liberation Sans" font-size="10.6" font-weight="normal" fill="#000" textLength="315.0" lengthAdjust="spacingAndGlyphs">(23) [01,725] DISC: DISC UNIQUE BRANCH Malformed PD/PDL (-1)</text></svg>
<svg style="left:7px;top:705.1px" width="14" height="13" viewBox="0 0 14 13"><polygon points="0,5.3 4,8.6 12.8,0 12.8,4 4.1,11.9 0,8.2" fill="#00a000"/><polygon points="12.8,4 4.1,11.9 0,8.2 0,7.6 4.1,11 12.8,3.2" fill="#008000"/></svg>
<svg style="left:26.6px;top:702.9px;overflow:visible" width="450.0" height="15"><text x="0" y="11" font-family="Liberation Sans" font-size="10.6" font-weight="normal" fill="#000" textLength="448.0" lengthAdjust="spacingAndGlyphs">(24) [01,805] DISC: DISC UNIQUE BRANCH Malformed Unicast Address (MUID byte swapped)</text></svg>
<svg style="left:7px;top:721.1px" width="14" height="13" viewBox="0 0 14 13"><polygon points="0,5.3 4,8.6 12.8,0 12.8,4 4.1,11.9 0,8.2" fill="#00a000"/><polygon points="12.8,4 4.1,11.9 0,8.2 0,7.6 4.1,11 12.8,3.2" fill="#008000"/></svg>
<svg style="left:26.6px;top:718.9px;overflow:visible" width="341.8" height="15"><text x="0" y="11" font-family="Liberation Sans" font-size="10.6" font-weight="normal" fill="#000" textLength="339.8" lengthAdjust="spacingAndGlyphs">(25) [01,886] DISC: DISC UNIQUE BRANCH Lower and Upper swapped</text></svg>
<svg style="left:7px;top:737.1px" width="14" height="13" viewBox="0 0 14 13"><polygon points="0,5.3 4,8.6 12.8,0 12.8,4 4.1,11.9 0,8.2" fill="#00a000"/><polygon points="12.8,4 4.1,11.9 0,8.2 0,7.6 4.1,11 12.8,3.2" fill="#008000"/></svg>
<svg style="left:26.6px;top:734.9px;overflow:visible" width="411.2" height="15"><text x="0" y="11" font-family="Liberation Sans" font-size="10.6" font-weight="normal" fill="#000" textLength="409.2" lengthAdjust="spacingAndGlyphs">(26) [01,951] DISC: DISC UNIQUE BRANCH [Root] Lower Target Responder UID Plus 1</text></svg>
<svg style="left:7px;top:753.1px" width="14" height="13" viewBox="0 0 14 13"><polygon points="0,5.3 4,8.6 12.8,0 12.8,4 4.1,11.9 0,8.2" fill="#00a000"/><polygon points="12.8,4 4.1,11.9 0,8.2 0,7.6 4.1,11 12.8,3.2" fill="#008000"/></svg>
<svg style="left:26.6px;top:750.9px;overflow:visible" width="416.0" height="15"><text x="0" y="11" font-family="Liberation Sans" font-size="10.6" font-weight="normal" fill="#000" textLength="414.0" lengthAdjust="spacingAndGlyphs">(27) [02,032] DISC: DISC UNIQUE BRANCH [Root] Upper Target Responder UID Minus 1</text></svg>
<svg style="left:7px;top:769.1px" width="14" height="13" viewBox="0 0 14 13"><polygon points="0,5.3 4,8.6 12.8,0 12.8,4 4.1,11.9 0,8.2" fill="#00a000"/><polygon points="12.8,4 4.1,11.9 0,8.2 0,7.6 4.1,11 12.8,3.2" fill="#008000"/></svg>
<svg style="left:26.6px;top:766.9px;overflow:visible" width="251.9" height="15"><text x="0" y="11" font-family="Liberation Sans" font-size="10.6" font-weight="normal" fill="#000" textLength="249.9" lengthAdjust="spacingAndGlyphs">(28) [02,113] DISC: DISC UN-MUTE, 534C:4704A00D</text></svg>
<svg style="left:7px;top:785.1px" width="14" height="13" viewBox="0 0 14 13"><polygon points="0,5.3 4,8.6 12.8,0 12.8,4 4.1,11.9 0,8.2" fill="#00a000"/><polygon points="12.8,4 4.1,11.9 0,8.2 0,7.6 4.1,11 12.8,3.2" fill="#008000"/></svg>
<svg style="left:26.6px;top:782.9px;overflow:visible" width="235.8" height="15"><text x="0" y="11" font-family="Liberation Sans" font-size="10.6" font-weight="normal" fill="#000" textLength="233.8" lengthAdjust="spacingAndGlyphs">(29) [02,177] DISC: DISC UNIQUE BRANCH [Root]</text></svg>
<svg style="left:7px;top:801.1px" width="14" height="13" viewBox="0 0 14 13"><polygon points="0,5.3 4,8.6 12.8,0 12.8,4 4.1,11.9 0,8.2" fill="#00a000"/><polygon points="12.8,4 4.1,11.9 0,8.2 0,7.6 4.1,11 12.8,3.2" fill="#008000"/></svg>
<svg style="left:26.6px;top:798.9px;overflow:visible" width="281.9" height="15"><text x="0" y="11" font-family="Liberation Sans" font-size="10.6" font-weight="normal" fill="#000" textLength="279.9" lengthAdjust="spacingAndGlyphs">(30) [02,258] GET: DISC MUTE [GET:Root] 534C:4704A00D</text></svg>
<svg style="left:7px;top:817.1px" width="14" height="13" viewBox="0 0 14 13"><polygon points="0,5.3 4,8.6 12.8,0 12.8,4 4.1,11.9 0,8.2" fill="#00a000"/><polygon points="12.8,4 4.1,11.9 0,8.2 0,7.6 4.1,11 12.8,3.2" fill="#008000"/></svg>
<svg style="left:26.6px;top:814.9px;overflow:visible" width="235.8" height="15"><text x="0" y="11" font-family="Liberation Sans" font-size="10.6" font-weight="normal" fill="#000" textLength="233.8" lengthAdjust="spacingAndGlyphs">(31) [02,352] DISC: DISC UNIQUE BRANCH [Root]</text></svg>
<svg style="left:7px;top:833.1px" width="14" height="13" viewBox="0 0 14 13"><polygon points="0,5.3 4,8.6 12.8,0 12.8,4 4.1,11.9 0,8.2" fill="#00a000"/><polygon points="12.8,4 4.1,11.9 0,8.2 0,7.6 4.1,11 12.8,3.2" fill="#008000"/></svg>
<svg style="left:26.6px;top:830.9px;overflow:visible" width="321.8" height="15"><text x="0" y="11" font-family="Liberation Sans" font-size="10.6" font-weight="normal" fill="#000" textLength="319.8" lengthAdjust="spacingAndGlyphs">(32) [02,403] DISC: DISC MUTE Malformed PD/PDL 534C:4704A00D</text></svg>
<svg style="left:7px;top:849.1px" width="14" height="13" viewBox="0 0 14 13"><polygon points="0,5.3 4,8.6 12.8,0 12.8,4 4.1,11.9 0,8.2" fill="#00a000"/><polygon points="12.8,4 4.1,11.9 0,8.2 0,7.6 4.1,11 12.8,3.2" fill="#008000"/></svg>
<svg style="left:26.6px;top:846.9px;overflow:visible" width="235.8" height="15"><text x="0" y="11" font-family="Liberation Sans" font-size="10.6" font-weight="normal" fill="#000" textLength="233.8" lengthAdjust="spacingAndGlyphs">(33) [02,483] DISC: DISC UNIQUE BRANCH [Root]</text></svg>
<svg style="left:7px;top:865.1px" width="14" height="13" viewBox="0 0 14 13"><polygon points="0,5.3 4,8.6 12.8,0 12.8,4 4.1,11.9 0,8.2" fill="#00a000"/><polygon points="12.8,4 4.1,11.9 0,8.2 0,7.6 4.1,11 12.8,3.2" fill="#008000"/></svg>
<svg style="left:26.6px;top:862.9px;overflow:visible" width="261.9" height="15"><text x="0" y="11" font-family="Liberation Sans" font-size="10.6" font-weight="normal" fill="#000" textLength="259.9" lengthAdjust="spacingAndGlyphs">(34) [02,566] DISC: DISC MUTE [Root] 534C:4704A00D</text></svg>
<svg style="left:7px;top:881.1px" width="14" height="13" viewBox="0 0 14 13"><polygon points="0,5.3 4,8.6 12.8,0 12.8,4 4.1,11.9 0,8.2" fill="#00a000"/><polygon points="12.8,4 4.1,11.9 0,8.2 0,7.6 4.1,11 12.8,3.2" fill="#008000"/></svg>
<svg style="left:26.6px;top:878.9px;overflow:visible" width="235.8" height="15"><text x="0" y="11" font-family="Liberation Sans" font-size="10.6" font-weight="normal" fill="#000" textLength="233.8" lengthAdjust="spacingAndGlyphs">(35) [02,645] DISC: DISC UNIQUE BRANCH [Root]</text></svg>
<svg style="left:7px;top:897.1px" width="14" height="13" viewBox="0 0 14 13"><polygon points="0,5.3 4,8.6 12.8,0 12.8,4 4.1,11.9 0,8.2" fill="#00a000"/><polygon points="12.8,4 4.1,11.9 0,8.2 0,7.6 4.1,11 12.8,3.2" fill="#008000"/></svg>
<svg style="left:26.6px;top:894.9px;overflow:visible" width="299.7" height="15"><text x="0" y="11" font-family="Liberation Sans" font-size="10.6" font-weight="normal" fill="#000" textLength="297.7" lengthAdjust="spacingAndGlyphs">(36) [02,710] GET: DISC UN-MUTE [GET:Root] 534C:4704A00D</text></svg>
<svg style="left:7px;top:913.1px" width="14" height="13" viewBox="0 0 14 13"><polygon points="0,5.3 4,8.6 12.8,0 12.8,4 4.1,11.9 0,8.2" fill="#00a000"/><polygon points="12.8,4 4.1,11.9 0,8.2 0,7.6 4.1,11 12.8,3.2" fill="#008000"/></svg>
<svg style="left:26.6px;top:910.9px;overflow:visible" width="235.8" height="15"><text x="0" y="11" font-family="Liberation Sans" font-size="10.6" font-weight="normal" fill="#000" textLength="233.8" lengthAdjust="spacingAndGlyphs">(37) [02,791] DISC: DISC UNIQUE BRANCH [Root]</text></svg>
<div style="left:7px;top:928.5px;width:14px;height:2px;overflow:hidden"><svg style="left:0px;top:0px" width="14" height="13" viewBox="0 0 14 13"><polygon points="0,5.3 4,8.6 12.8,0 12.8,4 4.1,11.9 0,8.2" fill="#00a000"/><polygon points="12.8,4 4.1,11.9 0,8.2 0,7.6 4.1,11 12.8,3.2" fill="#008000"/></svg></div>
<div style="left:902px;top:334px;width:17px;height:597px;background:#f0f0f0"></div>
<svg style="left:902px;top:338px" width="17" height="12" viewBox="0 0 17 12"><path d="M4.5 7.8 L8.5 3.8 L12.5 7.8" fill="none" stroke="#606060" stroke-width="2"/></svg>
<div style="left:903px;top:352px;width:15px;height:17px;background:#cdcdcd"></div>
<svg style="left:902px;top:915px" width="17" height="12" viewBox="0 0 17 12"><path d="M4.5 4 L8.5 8 L12.5 4" fill="none" stroke="#606060" stroke-width="2"/></svg>
<div style="left:2px;top:333px;width:918px;height:1px;background:#828790"></div>
<div style="left:2px;top:333px;width:1px;height:599px;background:#828790"></div>
<div style="left:2px;top:931px;width:918px;height:1px;background:#828790"></div>
<div style="left:919px;top:333px;width:1px;height:599px;background:#828790"></div>
<div style="left:920px;top:333px;width:6px;height:599px;background:#fff"></div>
<div style="left:922px;top:333px;width:1px;height:599px;background:#a0a0a0"></div>
<div style="left:925px;top:333px;width:1px;height:599px;background:#a0a0a0"></div>
<div style="left:926px;top:333px;width:992px;height:575px;background:#fff"></div>
<div style="left:926px;top:333px;width:992px;height:1px;background:#828790"></div>
<div style="left:926px;top:333px;width:1px;height:575px;background:#828790"></div>
<div style="left:1917px;top:333px;width:1px;height:599px;background:#828790"></div>
<div class="t" style="left:928.5px;top:336px;font-size:11.667px;color:#2a2a2a;font-weight:normal;font-family:'Liberation Mono', monospace;">GET: DEVICE LABEL Read back previous SET</div>
<div class="t" style="left:928.5px;top:352px;font-size:11.667px;color:#0000ff;font-weight:normal;font-family:'Liberation Mono', monospace;">ADVISORY</div>
<div class="t" style="left:928.5px;top:368px;font-size:11.667px;color:#2a2a2a;font-weight:normal;font-family:'Liberation Mono', monospace;">Response Type of [ACK] received</div>
<div class="t" style="left:928.5px;top:384px;font-size:11.667px;color:#2a2a2a;font-weight:normal;font-family:'Liberation Mono', monospace;">        Device Label [NON Print   char]</div>
<div class="t" style="left:928.5px;top:400px;font-size:11.667px;color:#2a2a2a;font-weight:normal;font-family:'Liberation Mono', monospace;">Device Label appears to have Substituted Printable Characters for the Non-Printable Characters</div>
<div class="t" style="left:928.5px;top:416px;font-size:11.667px;color:#2a2a2a;font-weight:normal;font-family:'Liberation Mono', monospace;">This is not recommended, although not prohibited</div>
<div class="t" style="left:928.5px;top:441.5px;font-size:11.667px;color:#2a2a2a;font-weight:normal;font-family:'Liberation Mono', monospace;">SET: DEVICE LABEL Data Error with 8 Bit characters [ÀÁBbCcDd]</div>
<div class="t" style="left:928.5px;top:457.5px;font-size:11.667px;color:#0000ff;font-weight:normal;font-family:'Liberation Mono', monospace;">ADVISORY</div>
<div class="t" style="left:928.5px;top:473.5px;font-size:11.667px;color:#606060;font-weight:normal;font-family:'Liberation Mono', monospace;">Response Type [ACK] NOT Expected</div>
<div class="t" style="left:928.5px;top:489.5px;font-size:11.667px;color:#2a2a2a;font-weight:normal;font-family:'Liberation Mono', monospace;">SET:DEVICE LABEL contained one or more illegal 8 bit ASCII characters</div>
<div class="t" style="left:928.5px;top:505.5px;font-size:11.667px;color:#2a2a2a;font-weight:normal;font-family:'Liberation Mono', monospace;">Refer to E1.20 section 10.1, ISO/IEC 646</div>
<div class="t" style="left:928.5px;top:521.5px;font-size:11.667px;color:#2a2a2a;font-weight:normal;font-family:'Liberation Mono', monospace;">--- Valid Response(s):</div>
<div class="t" style="left:928.5px;top:537.5px;font-size:11.667px;color:#2a2a2a;font-weight:normal;font-family:'Liberation Mono', monospace;">        [NACK] with NR of [Data Out Of Range]</div>
<div class="t" style="left:928.5px;top:563.5px;font-size:11.667px;color:#2a2a2a;font-weight:normal;font-family:'Liberation Mono', monospace;">GET: DEVICE LABEL Read back previous SET</div>
<div class="t" style="left:928.5px;top:579.5px;font-size:11.667px;color:#0000ff;font-weight:normal;font-family:'Liberation Mono', monospace;">ADVISORY</div>
<div class="t" style="left:928.5px;top:595.5px;font-size:11.667px;color:#2a2a2a;font-weight:normal;font-family:'Liberation Mono', monospace;">Response Type of [ACK] received</div>
<div class="t" style="left:928.5px;top:611.5px;font-size:11.667px;color:#2a2a2a;font-weight:normal;font-family:'Liberation Mono', monospace;">        Device Label [ÀÁBbCcDd]</div>
<div class="t" style="left:928.5px;top:627.5px;font-size:11.667px;color:#2a2a2a;font-weight:normal;font-family:'Liberation Mono', monospace;">DEVICE LABEL contains one or more illegal 8 bit ASCII characters: [(0xC0)] starting at position 1</div>
<div class="t" style="left:928.5px;top:643.5px;font-size:11.667px;color:#2a2a2a;font-weight:normal;font-family:'Liberation Mono', monospace;">It is NOT recommended that 8 bit characters be used.</div>
<div class="t" style="left:928.5px;top:659.5px;font-size:11.667px;color:#2a2a2a;font-weight:normal;font-family:'Liberation Mono', monospace;">They might cause display issues in the Controller.</div>
<div class="t" style="left:928.5px;top:675.5px;font-size:11.667px;color:#2a2a2a;font-weight:normal;font-family:'Liberation Mono', monospace;">Refer to E1.20 section 10.1, ISO/IEC 646</div>
<div class="t" style="left:928.5px;top:691.5px;font-size:11.667px;color:#2a2a2a;font-weight:normal;font-family:'Liberation Mono', monospace;">Device Label is a complete match</div>
<div style="left:926px;top:907px;width:991px;height:1px;background:#828790"></div>
<div style="left:926px;top:908px;width:991px;height:2px;background:#fff"></div>
<div style="left:925px;top:910px;width:992px;height:1px;background:#a0a0a0"></div>
<div style="left:926px;top:911px;width:991px;height:2px;background:#fff"></div>
<div style="left:925px;top:913px;width:992px;height:1px;background:#a0a0a0"></div>
<div style="left:926px;top:914px;width:991px;height:17px;background:#f0f0f0"></div>
<div style="left:926px;top:931px;width:992px;height:1px;background:#a0a0a0"></div>
<div style="left:0px;top:932px;width:1920px;height:1px;background:#fff"></div>
<div style="left:0px;top:933px;width:1920px;height:1px;background:#a0a0a0"></div>
<svg style="left:930px;top:917px" width="12" height="15" viewBox="0 0 12 15"><polygon points="5.5,0.3 11,5.8 11,7.8 8,7.8 8,14 3,14 3,7.8 0,7.8 0,5.8" fill="#0050d0" stroke="#0038a8" stroke-width="0.8"/></svg>
<div class="t" style="left:1391px;top:918px;font-size:10.9px;color:#000;font-weight:normal;font-family:'Liberation Sans', sans-serif;">Start Up Log</div>
<div style="left:103px;top:935px;width:325px;height:80px;background:#fff;border:1px solid #a0a0a0;box-sizing:border-box"></div>
<div style="left:104px;top:936px;width:101px;height:77px;background:#f0f0f0"></div>
<div style="left:205px;top:937px;width:1px;height:76px;background:#8c8c8c"></div>
<div style="left:105px;top:955px;width:100px;height:1px;background:#8c8c8c"></div>
<div style="left:206px;top:955px;width:221px;height:1px;background:#f0f0f0"></div>
<div class="t" style="left:100px;top:940.8px;font-size:10.6px;color:#000;font-weight:normal;font-family:'Liberation Sans', sans-serif;width:102.7px;text-align:right">Responder UID:</div>
<div class="t" style="left:208.7px;top:940.8px;font-size:10.6px;color:#000;font-weight:normal;font-family:'Liberation Sans', sans-serif;">534C:4704A00D</div>
<div style="left:105px;top:974px;width:100px;height:1px;background:#8c8c8c"></div>
<div style="left:206px;top:974px;width:221px;height:1px;background:#f0f0f0"></div>
<div class="t" style="left:100px;top:959.8px;font-size:10.6px;color:#000;font-weight:normal;font-family:'Liberation Sans', sans-serif;width:102.7px;text-align:right">Manufacturer ID:</div>
<div class="t" style="left:208.7px;top:959.8px;font-size:10.6px;color:#000;font-weight:normal;font-family:'Liberation Sans', sans-serif;">(534C) SOUNDLIGHT</div>
<div style="left:105px;top:993px;width:100px;height:1px;background:#8c8c8c"></div>
<div style="left:206px;top:993px;width:221px;height:1px;background:#f0f0f0"></div>
<div class="t" style="left:100px;top:978.8px;font-size:10.6px;color:#000;font-weight:normal;font-family:'Liberation Sans', sans-serif;width:102.7px;text-align:right">Manufacturer Label:</div>
<div class="t" style="left:208.7px;top:978.8px;font-size:10.6px;color:#000;font-weight:normal;font-family:'Liberation Sans', sans-serif;">SOUNDLIGHT The DMX Company</div>
<div style="left:105px;top:1012px;width:100px;height:1px;background:#8c8c8c"></div>
<div style="left:206px;top:1012px;width:221px;height:1px;background:#f0f0f0"></div>
<div class="t" style="left:100px;top:997.8px;font-size:10.6px;color:#000;font-weight:normal;font-family:'Liberation Sans', sans-serif;width:102.7px;text-align:right">Model Description:</div>
<div class="t" style="left:208.7px;top:997.8px;font-size:10.6px;color:#000;font-weight:normal;font-family:'Liberation Sans', sans-serif;">4704A-EP &lt;RDMIZER&gt; Interface</div>
<div class="t" style="left:931px;top:941.7px;font-size:17.4px;color:#000;font-weight:bold;font-family:'Liberation Sans', sans-serif;">Statistics</div>
<div style="left:668px;top:968px;width:601px;height:47px;background:#fff;border:1px solid #a0a0a0;box-sizing:border-box"></div>
<div style="left:669px;top:993px;width:599px;height:21px;background:#cfeefe"></div>
<svg style="left:683px;top:974px" width="15" height="14" viewBox="0 0 15 14"><polygon points="0,6.4 7.7,0 7.7,3 11.9,0 11.9,3.2 14.1,3.2 14.1,9.6 11.9,9.6 11.9,13 7.7,10 7.7,13" fill="#0050d0"/></svg>
<div class="t" style="left:709.8px;top:974.75px;font-size:10.6px;color:#000;font-weight:normal;font-family:'Liberation Sans', sans-serif;">Total Run</div>
<div class="t" style="left:668px;top:996.6px;font-size:10.6px;color:#000;font-weight:normal;font-family:'Liberation Sans', sans-serif;width:100px;text-align:center">7113</div>
<div style="left:768px;top:969px;width:1px;height:24px;background:#e6e6e6"></div>
<svg style="left:788.5px;top:974px" width="15" height="14" viewBox="0 0 15 14"><polygon points="0,5.8 4.2,8.4 13.3,0 13.3,3.9 4.6,12.4 0,8.8" fill="#00a000"/></svg>
<div class="t" style="left:815.5px;top:974.75px;font-size:10.6px;color:#000;font-weight:normal;font-family:'Liberation Sans', sans-serif;">Passed</div>
<div class="t" style="left:768px;top:996.6px;font-size:10.6px;color:#000;font-weight:normal;font-family:'Liberation Sans', sans-serif;width:100px;text-align:center">7109</div>
<div style="left:868px;top:969px;width:1px;height:24px;background:#e6e6e6"></div>
<svg style="left:892px;top:974px" width="15" height="14" viewBox="0 0 15 14"><path d="M1.5 1.5 L12.5 12.5 M12.5 1.5 L1.5 12.5" stroke="#dd0000" stroke-width="2.6"/></svg>
<div class="t" style="left:918px;top:974.75px;font-size:10.6px;color:#000;font-weight:normal;font-family:'Liberation Sans', sans-serif;">Failed</div>
<div class="t" style="left:868px;top:996.6px;font-size:10.6px;color:#000;font-weight:normal;font-family:'Liberation Sans', sans-serif;width:100px;text-align:center">1</div>
<div style="left:968px;top:969px;width:1px;height:24px;background:#e6e6e6"></div>
<svg style="left:977px;top:974px" width="15" height="14" viewBox="0 0 15 14"><path d="M1.5 1.5 L12.5 12.5 M12.5 1.5 L1.5 12.5" stroke="#eeee00" stroke-width="2.6"/></svg>
<div class="t" style="left:1002.7px;top:974.75px;font-size:10.6px;color:#000;font-weight:normal;font-family:'Liberation Sans', sans-serif;">Warnings</div>
<div class="t" style="left:968px;top:996.6px;font-size:10.6px;color:#000;font-weight:normal;font-family:'Liberation Sans', sans-serif;width:100px;text-align:center">0</div>
<div style="left:1068px;top:969px;width:1px;height:24px;background:#e6e6e6"></div>
<svg style="left:1076px;top:974px" width="15" height="14" viewBox="0 0 15 14"><path d="M1.5 1.5 L12.5 12.5 M12.5 1.5 L1.5 12.5" stroke="#0050c8" stroke-width="2.6"/></svg>
<div class="t" style="left:1102.7px;top:974.75px;font-size:10.6px;color:#000;font-weight:normal;font-family:'Liberation Sans', sans-serif;">Advisories</div>
<div class="t" style="left:1068px;top:996.6px;font-size:10.6px;color:#000;font-weight:normal;font-family:'Liberation Sans', sans-serif;width:100px;text-align:center">3</div>
<div style="left:1168px;top:969px;width:1px;height:24px;background:#e6e6e6"></div>
<svg style="left:1176px;top:974px" width="15" height="14" viewBox="0 0 15 14"><path d="M1.5 1.5 L12.5 12.5 M12.5 1.5 L1.5 12.5" stroke="#ff00cc" stroke-width="2.6"/></svg>
<div class="t" style="left:1202.7px;top:974.75px;font-size:10.6px;color:#000;font-weight:normal;font-family:'Liberation Sans', sans-serif;">Timing</div>
<div class="t" style="left:1168px;top:996.6px;font-size:10.6px;color:#000;font-weight:normal;font-family:'Liberation Sans', sans-serif;width:100px;text-align:center">0</div>
<div style="left:0px;top:1021px;width:1920px;height:19px;background:#f0f0f0"></div>
<div style="left:0px;top:1021px;width:1920px;height:1px;background:#dadada"></div>
<div style="left:99px;top:1023px;width:1px;height:17px;background:#dadada"></div>
<div style="left:399px;top:1023px;width:1px;height:17px;background:#dadada"></div>
<div style="left:599px;top:1023px;width:1px;height:17px;background:#dadada"></div>
<div style="left:899px;top:1023px;width:1px;height:17px;background:#dadada"></div>
<div style="left:1049px;top:1023px;width:1px;height:17px;background:#dadada"></div>
<div style="left:1279px;top:1023px;width:1px;height:17px;background:#dadada"></div>
<div class="t" style="left:104.5px;top:1025px;font-size:10.6px;color:#000;font-weight:normal;font-family:'Liberation Sans', sans-serif;">Software Version Label SW Mk 1.1  RDM Mk 4.B</div>
<div class="t" style="left:404px;top:1025px;font-size:10.6px;color:#000;font-weight:normal;font-family:'Liberation Sans', sans-serif;">SW Ver ID: 67830017 (0x040B0101)</div>
<div class="t" style="left:604px;top:1025px;font-size:10.6px;color:#000;font-weight:normal;font-family:'Liberation Sans', sans-serif;">Personality:(1) Personality #1</div>
</body></html>
